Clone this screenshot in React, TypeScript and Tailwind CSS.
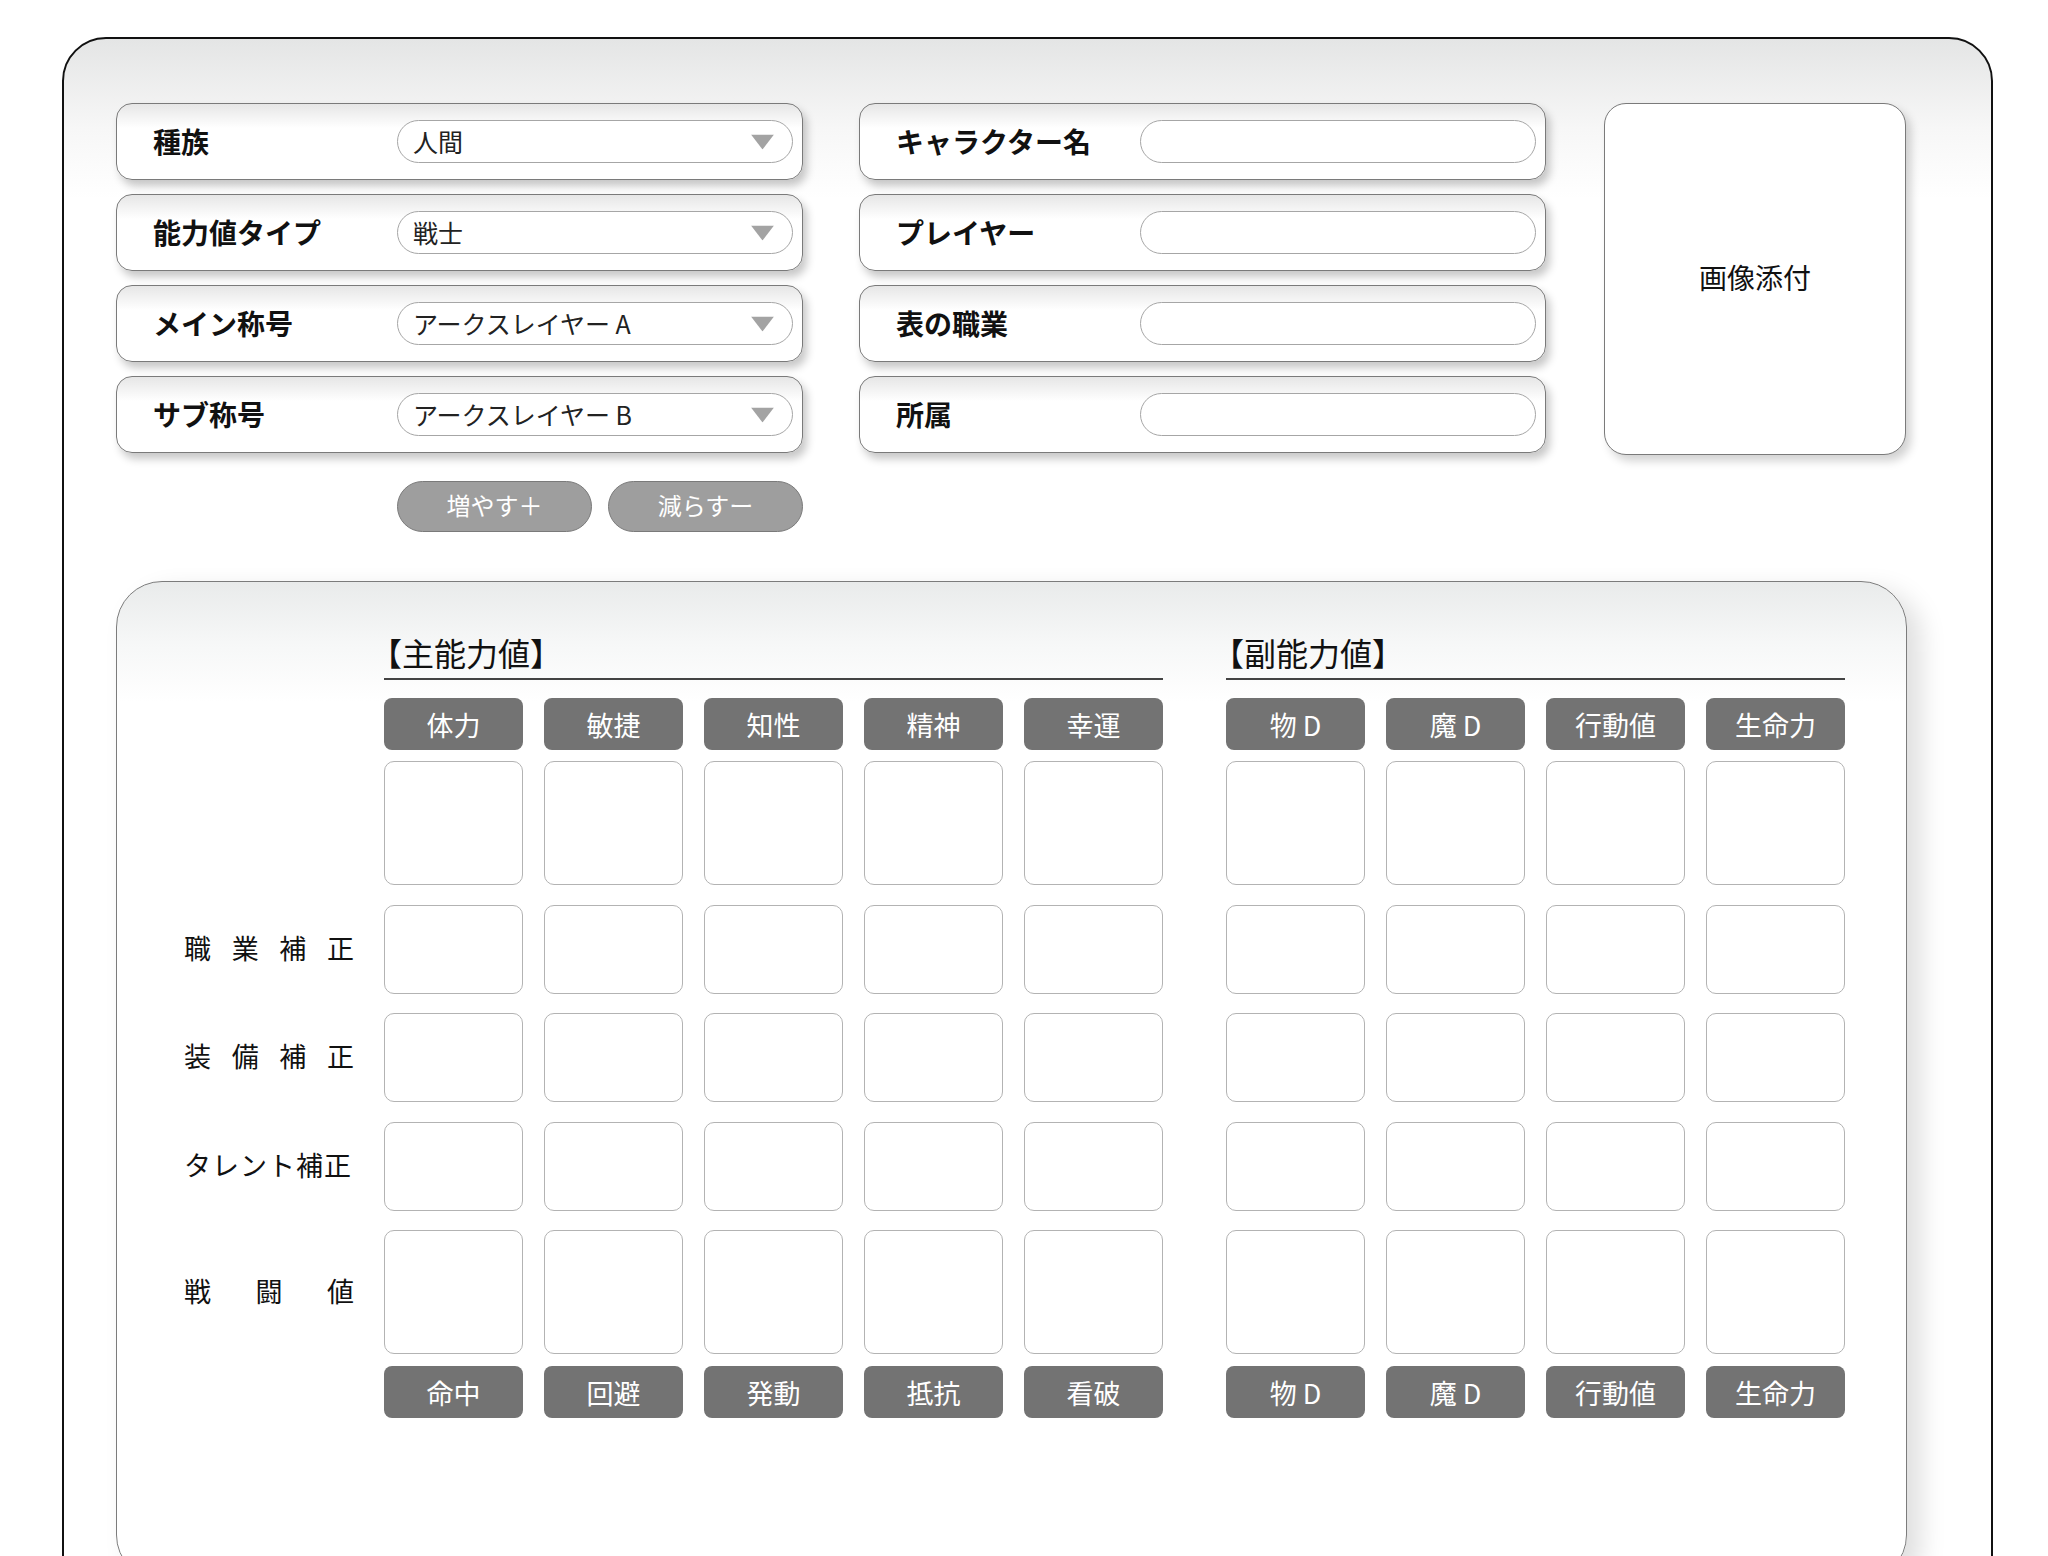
import React from "react";

const FONT = "font-['Noto_Sans_CJK_JP','Noto_Sans',sans-serif]";

function FieldBox({ label, children }: { label: string; children: React.ReactNode }) {
  return (
    <div className="h-[77px] rounded-[16px] border border-[#7a7a7a] bg-[linear-gradient(to_bottom,#e6e6e6_0px,#ffffff_24px)] shadow-[4px_6px_8px_rgba(0,0,0,0.22)] flex items-center pl-[36px] pr-[9px]">
      <div className="flex-1 text-[28px] font-bold text-[#111] leading-none -mt-[2px]">{label}</div>
      {children}
    </div>
  );
}

function SelectBox({ value }: { value: string }) {
  return (
    <div className="relative w-[396px] h-[43px] rounded-full border border-[#a6a6a6] bg-white flex items-center pl-[15px] text-[25px] text-[#222] leading-none">
      <span>{value}</span>
      <svg className="absolute right-[18px] top-1/2 -translate-y-1/2" width="23" height="15" viewBox="0 0 23 15">
        <polygon points="0,0 23,0 11.5,15" fill="#a3a3a3" />
      </svg>
    </div>
  );
}

function InputBox() {
  return <div className="w-[396px] h-[43px] rounded-full border border-[#a6a6a6] bg-white" />;
}

function Chip({ text }: { text: string }) {
  return (
    <div className="rounded-[8px] bg-[#737373] text-white text-[27px] leading-none flex items-center justify-center">
      {text}
    </div>
  );
}

function Cell() {
  return <div className="rounded-[10px] border border-[#b3b3b3] bg-white" />;
}

const mainHeaders = ["体力", "敏捷", "知性", "精神", "幸運"];
const subHeaders = ["物 D", "魔 D", "行動値", "生命力"];
const mainFooters = ["命中", "回避", "発動", "抵抗", "看破"];

type RowDef = { label: string[] | null; h: string; mt: string };

const rows: RowDef[] = [
  { label: null, h: "h-[124px]", mt: "mt-[11px]" },
  { label: ["職", "業", "補", "正"], h: "h-[89px]", mt: "mt-[20px]" },
  { label: ["装", "備", "補", "正"], h: "h-[89px]", mt: "mt-[19px]" },
  { label: ["タレント補正"], h: "h-[89px]", mt: "mt-[20px]" },
  { label: ["戦", "闘", "値"], h: "h-[124px]", mt: "mt-[19px]" },
];

function GridRow({
  label,
  h,
  mt,
  main,
  sub,
}: {
  label: string[] | null;
  h: string;
  mt: string;
  main: React.ReactNode[];
  sub: React.ReactNode[];
}) {
  return (
    <div className={`flex ${h} ${mt}`}>
      <div className="pl-[67px] w-[267px] flex items-center">
        {label && (
          <div className="w-[171px] flex justify-between text-[27px] text-[#111] leading-none tracking-[1px] whitespace-nowrap -mt-[4px]">
            {label.map((c, i) => (
              <span key={i}>{c}</span>
            ))}
          </div>
        )}
      </div>
      <div className="w-[779px] grid grid-cols-5 gap-x-[21px]">{main}</div>
      <div className="w-[619px] ml-[63px] grid grid-cols-4 gap-x-[21px]">{sub}</div>
    </div>
  );
}

export default function App() {
  return (
    <div className={`${FONT} bg-white w-[2048px] h-[1556px] overflow-hidden`}>
      <div className="ml-[62px] mt-[37px] w-[1931px] min-h-[1600px] rounded-[44px] border-2 border-[#111] bg-[linear-gradient(to_bottom,#e4e5e5_0px,#f7f7f7_90px,#ffffff_160px)] pl-[52px] pt-[64px]">
        {/* Top section */}
        <div className="flex items-start">
          <div className="w-[687px] flex flex-col">
            <div className="flex flex-col gap-[14px]">
              <FieldBox label="種族">
                <SelectBox value="人間" />
              </FieldBox>
              <FieldBox label="能力値タイプ">
                <SelectBox value="戦士" />
              </FieldBox>
              <FieldBox label="メイン称号">
                <SelectBox value="アークスレイヤー A" />
              </FieldBox>
              <FieldBox label="サブ称号">
                <SelectBox value="アークスレイヤー B" />
              </FieldBox>
            </div>
            <div className="mt-[28px] flex justify-end gap-[16px]">
              <div className="w-[195px] h-[51px] rounded-full bg-[#9e9e9e] border border-[#7a7a7a] text-white text-[24px] flex items-center justify-center leading-none pb-[4px]">
                増やす＋
              </div>
              <div className="w-[195px] h-[51px] rounded-full bg-[#9e9e9e] border border-[#7a7a7a] text-white text-[24px] flex items-center justify-center leading-none pb-[4px]">
                減らすー
              </div>
            </div>
          </div>
          <div className="w-[687px] ml-[56px] flex flex-col gap-[14px]">
            <FieldBox label="キャラクター名">
              <InputBox />
            </FieldBox>
            <FieldBox label="プレイヤー">
              <InputBox />
            </FieldBox>
            <FieldBox label="表の職業">
              <InputBox />
            </FieldBox>
            <FieldBox label="所属">
              <InputBox />
            </FieldBox>
          </div>
          <div className="ml-[58px] w-[302px] h-[352px] rounded-[22px] border border-[#7a7a7a] bg-white shadow-[5px_6px_10px_rgba(0,0,0,0.18)] flex items-center justify-center text-[28px] text-[#111] pb-[4px]">
            画像添付
          </div>
        </div>

        {/* Inner stats card */}
        <div className="mt-[49px] w-[1791px] min-h-[1000px] rounded-[46px] border-[1.5px] border-[#7c7c7c] bg-[linear-gradient(to_bottom,#e9ebeb_0px,#f6f7f7_60px,#ffffff_120px)] shadow-[14px_10px_26px_rgba(0,0,0,0.13)] pt-[50px]">
          {/* Titles */}
          <div className="flex">
            <div className="w-[267px]" />
            <div className="w-[779px]">
              <div className="text-[32px] leading-[40px] text-[#111] -ml-[14px]">【主能力値】</div>
              <div className="mt-[6px] h-[2px] bg-[#444]" />
            </div>
            <div className="w-[619px] ml-[63px]">
              <div className="text-[32px] leading-[40px] text-[#111] -ml-[14px]">【副能力値】</div>
              <div className="mt-[6px] h-[2px] bg-[#444]" />
            </div>
          </div>

          {/* Header chips */}
          <div className="flex h-[52px] mt-[18px]">
            <div className="w-[267px]" />
            <div className="w-[779px] grid grid-cols-5 gap-x-[21px]">
              {mainHeaders.map((t) => (
                <Chip key={t} text={t} />
              ))}
            </div>
            <div className="w-[619px] ml-[63px] grid grid-cols-4 gap-x-[21px]">
              {subHeaders.map((t) => (
                <Chip key={t} text={t} />
              ))}
            </div>
          </div>

          {rows.map((r, i) => (
            <GridRow
              key={i}
              label={r.label}
              h={r.h}
              mt={r.mt}
              main={mainHeaders.map((_, j) => <Cell key={j} />)}
              sub={subHeaders.map((_, j) => <Cell key={j} />)}
            />
          ))}

          {/* Footer chips */}
          <div className="flex h-[52px] mt-[12px]">
            <div className="w-[267px]" />
            <div className="w-[779px] grid grid-cols-5 gap-x-[21px]">
              {mainFooters.map((t) => (
                <Chip key={t} text={t} />
              ))}
            </div>
            <div className="w-[619px] ml-[63px] grid grid-cols-4 gap-x-[21px]">
              {subHeaders.map((t) => (
                <Chip key={t + "f"} text={t} />
              ))}
            </div>
          </div>
        </div>
      </div>
    </div>
  );
}
